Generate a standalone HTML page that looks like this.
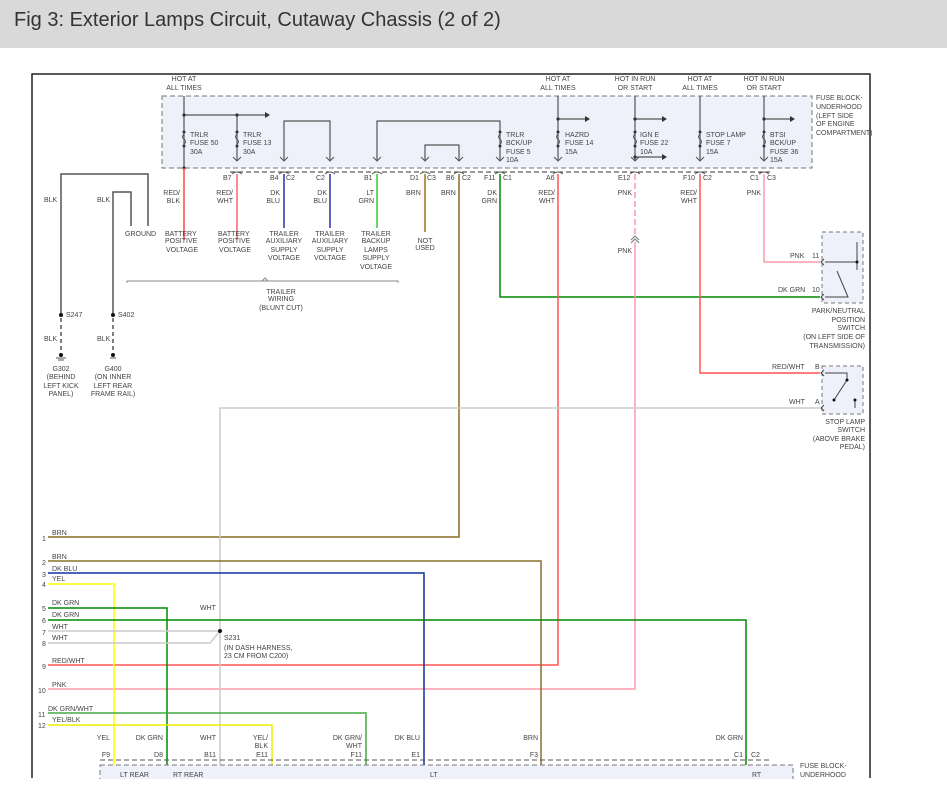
<!DOCTYPE html>
<html><head><meta charset="utf-8"><style>
html,body{margin:0;padding:0;background:#fff;}
body{width:947px;height:804px;overflow:hidden;}
.hdr{position:absolute;left:0;top:0;width:947px;height:48px;background:#d9d9d9;}
.hdr span{position:absolute;left:14px;top:9px;font:20px "Liberation Sans",sans-serif;color:#333;}
svg{position:absolute;left:0;top:0;}
text{font-family:"Liberation Sans",sans-serif;font-size:7px;fill:#444;}
</style></head><body>
<div class="hdr"><span>Fig 3: Exterior Lamps Circuit, Cutaway Chassis (2 of 2)</span></div>
<svg width="947" height="804" viewBox="0 0 947 804">
<!-- frame -->
<path d="M32 778V74H870V778" fill="none" stroke="#222" stroke-width="1.5"/>
<!-- fuse block -->
<rect x="162" y="96" width="650" height="72" fill="#eef0fa" stroke="#777" stroke-dasharray="5,3"/>
<path d="M230 172H770" stroke="#333" stroke-dasharray="5,3"/>
<g fill="none" stroke="#555" stroke-width="1.2">
<path d="M184 96V168M184 115H265M237 115V160"/>
<path d="M284 160V121H330V160M377 160V121H500V160M425 160V145H459V160"/>
<path d="M558 96V160M558 119H585M635 96V160M635 119H662M635 157H662M700 96V160M764 96V160M764 119H790"/>
</g>
<g fill="#333"><path d="M265 112l5 3-5 3zM585 116l5 3-5 3zM662 116l5 3-5 3zM662 154l5 3-5 3zM790 116l5 3-5 3z"/>
<circle cx="184" cy="115" r="1.6"/><circle cx="237" cy="115" r="1.6"/><circle cx="558" cy="119" r="1.6"/><circle cx="635" cy="119" r="1.6"/><circle cx="635" cy="157" r="1.6"/><circle cx="764" cy="119" r="1.6"/><circle cx="184" cy="168" r="1.6"/>
<circle cx="184" cy="132" r="1.5"/><circle cx="184" cy="146" r="1.5"/><circle cx="237" cy="132" r="1.5"/><circle cx="237" cy="146" r="1.5"/><circle cx="500" cy="132" r="1.5"/><circle cx="500" cy="146" r="1.5"/><circle cx="558" cy="132" r="1.5"/><circle cx="558" cy="146" r="1.5"/><circle cx="635" cy="132" r="1.5"/><circle cx="635" cy="146" r="1.5"/><circle cx="700" cy="132" r="1.5"/><circle cx="700" cy="146" r="1.5"/><circle cx="764" cy="132" r="1.5"/><circle cx="764" cy="146" r="1.5"/></g>
<g fill="#eef0fa" stroke="#555"><path d="M184 134q-3 3 0 5q3 3 0 5M237 134q-3 3 0 5q3 3 0 5M500 134q-3 3 0 5q3 3 0 5M558 134q-3 3 0 5q3 3 0 5M635 134q-3 3 0 5q3 3 0 5M700 134q-3 3 0 5q3 3 0 5M764 134q-3 3 0 5q3 3 0 5" fill="none"/></g>
<g fill="none" stroke="#555"><path d="M233 157l4 4 4-4M280 157l4 4 4-4M326 157l4 4 4-4M373 157l4 4 4-4M421 157l4 4 4-4M455 157l4 4 4-4M496 157l4 4 4-4M554 157l4 4 4-4M631 157l4 4 4-4M696 157l4 4 4-4M760 157l4 4 4-4"/>
<path d="M232 174q5-4 10 0M279 174q5-4 10 0M325 174q5-4 10 0M372 174q5-4 10 0M420 174q5-4 10 0M454 174q5-4 10 0M495 174q5-4 10 0M553 174q5-4 10 0M630 174q5-4 10 0M695 174q5-4 10 0M759 174q5-4 10 0"/></g>
<!-- wires top -->
<g fill="none" stroke-width="1.5">
<path d="M184 168V240" stroke="#f44"/>
<path d="M237 174V240" stroke="#f66"/>
<path d="M284 174V228" stroke="#2233aa"/>
<path d="M330 174V228" stroke="#2233aa"/>
<path d="M377 174V228" stroke="#3c3"/>
<path d="M425 174V232" stroke="#a07020"/>
<path d="M459 174V537H48" stroke="#8a6a20"/>
<path d="M500 174V297H820" stroke="#080"/>
<path d="M558 174V665H48" stroke="#f55"/>
<path d="M635 174V236" stroke="#f9a" stroke-dasharray="6,3"/>
<path d="M635 242V689H48" stroke="#f9a"/>
<path d="M700 174V373H820" stroke="#f55"/>
<path d="M764 174V262H820" stroke="#f9a"/>
<path d="M820 408H220V778" stroke="#ccc"/>
<path d="M48 561H541V770" stroke="#8a7028"/>
<path d="M48 573H424V770" stroke="#1030a0"/>
<path d="M48 584H114V770" stroke="#ff0"/>
<path d="M48 608H167V770" stroke="#080"/>
<path d="M48 620H746V770" stroke="#080"/>
<path d="M48 631H220" stroke="#ccc"/>
<path d="M48 643H210L220 631" stroke="#ccc"/>
<path d="M48 713H366V770" stroke="#4a4"/>
<path d="M48 725H272V770" stroke="#ee0"/>
</g>
<path d="M631 240l4-4 4 4M631 243l4-4 4 4" fill="none" stroke="#777"/>
<circle cx="220" cy="631" r="2" fill="#111"/>
<!-- ground wires -->
<g fill="none" stroke="#555" stroke-width="1.5">
<path d="M61 315V174H148V226M113 315V192H131V226"/>
<path d="M61 318V350M113 318V350" stroke-dasharray="4,3"/>
</g>
<g fill="#111"><circle cx="61" cy="315" r="2"/><circle cx="113" cy="315" r="2"/><circle cx="61" cy="355" r="2"/><circle cx="113" cy="355" r="2"/></g>
<path d="M56 358h10M58 360h6M110 358h6" stroke="#555"/>
<path d="M127 283v-2H398v2M262 281l3-3 3 3" fill="none" stroke="#888"/>
<!-- switches -->
<rect x="822" y="232" width="41" height="71" fill="#eef0fa" stroke="#777" stroke-dasharray="4,3"/>
<rect x="822" y="366" width="41" height="48" fill="#eef0fa" stroke="#777" stroke-dasharray="4,3"/>
<g fill="none" stroke="#444"><path d="M825 262H858M857 242V270M825 297H848L837 271M825 373H847V380L834 400M825 408M855 400V408"/><path d="M824 259l-3 3 3 3M824 294l-3 3 3 3M824 370l-3 3 3 3M824 405l-3 3 3 3"/></g>
<g fill="#111"><circle cx="857" cy="262" r="1.5"/><circle cx="847" cy="380" r="1.5"/><circle cx="834" cy="400" r="1.5"/><circle cx="855" cy="400" r="1.5"/></g>
<!-- bottom block -->
<path d="M100 760H770" stroke="#555" stroke-dasharray="5,3"/>
<rect x="100" y="765" width="693" height="20" fill="#eef0fa" stroke="#777" stroke-dasharray="5,3"/>
<!-- texts -->
<g>
<text x="184" y="81" text-anchor="middle">HOT AT</text><text x="184" y="90" text-anchor="middle">ALL TIMES</text>
<text x="558" y="81" text-anchor="middle">HOT AT</text><text x="558" y="90" text-anchor="middle">ALL TIMES</text>
<text x="635" y="81" text-anchor="middle">HOT IN RUN</text><text x="635" y="90" text-anchor="middle">OR START</text>
<text x="700" y="81" text-anchor="middle">HOT AT</text><text x="700" y="90" text-anchor="middle">ALL TIMES</text>
<text x="764" y="81" text-anchor="middle">HOT IN RUN</text><text x="764" y="90" text-anchor="middle">OR START</text>
<text x="816" y="100">FUSE BLOCK-</text><text x="816" y="109">UNDERHOOD</text><text x="816" y="118">(LEFT SIDE</text><text x="816" y="126">OF ENGINE</text><text x="816" y="135">COMPARTMENT)</text>
<text x="190" y="137">TRLR</text><text x="190" y="145">FUSE 50</text><text x="190" y="154">30A</text>
<text x="243" y="137">TRLR</text><text x="243" y="145">FUSE 13</text><text x="243" y="154">30A</text>
<text x="506" y="137">TRLR</text><text x="506" y="145">BCK/UP</text><text x="506" y="154">FUSE 5</text><text x="506" y="162">10A</text>
<text x="565" y="137">HAZRD</text><text x="565" y="145">FUSE 14</text><text x="565" y="154">15A</text>
<text x="640" y="137">IGN E</text><text x="640" y="145">FUSE 22</text><text x="640" y="154">10A</text>
<text x="706" y="137">STOP LAMP</text><text x="706" y="145">FUSE 7</text><text x="706" y="154">15A</text>
<text x="770" y="137">BTSI</text><text x="770" y="145">BCK/UP</text><text x="770" y="154">FUSE 36</text><text x="770" y="162">15A</text>
<text x="223" y="180">B7</text><text x="270" y="180">B4</text><text x="286" y="180">C2</text><text x="316" y="180">C2</text><text x="364" y="180">B1</text><text x="410" y="180">D1</text><text x="427" y="180">C3</text><text x="446" y="180">B6</text><text x="462" y="180">C2</text><text x="484" y="180">F11</text><text x="503" y="180">C1</text><text x="546" y="180">A6</text><text x="618" y="180">E12</text><text x="683" y="180">F10</text><text x="703" y="180">C2</text><text x="750" y="180">C1</text><text x="767" y="180">C3</text>
<text x="180" y="195" text-anchor="end">RED/</text><text x="180" y="203" text-anchor="end">BLK</text>
<text x="233" y="195" text-anchor="end">RED/</text><text x="233" y="203" text-anchor="end">WHT</text>
<text x="280" y="195" text-anchor="end">DK</text><text x="280" y="203" text-anchor="end">BLU</text>
<text x="327" y="195" text-anchor="end">DK</text><text x="327" y="203" text-anchor="end">BLU</text>
<text x="374" y="195" text-anchor="end">LT</text><text x="374" y="203" text-anchor="end">GRN</text>
<text x="406" y="195">BRN</text><text x="441" y="195">BRN</text>
<text x="497" y="195" text-anchor="end">DK</text><text x="497" y="203" text-anchor="end">GRN</text>
<text x="555" y="195" text-anchor="end">RED/</text><text x="555" y="203" text-anchor="end">WHT</text>
<text x="632" y="195" text-anchor="end">PNK</text>
<text x="697" y="195" text-anchor="end">RED/</text><text x="697" y="203" text-anchor="end">WHT</text>
<text x="761" y="195" text-anchor="end">PNK</text>
<text x="632" y="253" text-anchor="end">PNK</text>
<text x="44" y="202">BLK</text><text x="97" y="202">BLK</text>
<text x="125" y="236">GROUND</text>
<text x="165" y="236">BATTERY</text><text x="165" y="243">POSITIVE</text><text x="166" y="252">VOLTAGE</text>
<text x="218" y="236">BATTERY</text><text x="218" y="243">POSITIVE</text><text x="219" y="252">VOLTAGE</text>
<text x="284" y="236" text-anchor="middle">TRAILER</text><text x="284" y="243" text-anchor="middle">AUXILIARY</text><text x="284" y="252" text-anchor="middle">SUPPLY</text><text x="284" y="260" text-anchor="middle">VOLTAGE</text>
<text x="330" y="236" text-anchor="middle">TRAILER</text><text x="330" y="243" text-anchor="middle">AUXILIARY</text><text x="330" y="252" text-anchor="middle">SUPPLY</text><text x="330" y="260" text-anchor="middle">VOLTAGE</text>
<text x="376" y="236" text-anchor="middle">TRAILER</text><text x="376" y="243" text-anchor="middle">BACKUP</text><text x="376" y="252" text-anchor="middle">LAMPS</text><text x="376" y="260" text-anchor="middle">SUPPLY</text><text x="376" y="269" text-anchor="middle">VOLTAGE</text>
<text x="425" y="243" text-anchor="middle">NOT</text><text x="425" y="250" text-anchor="middle">USED</text>
<text x="281" y="294" text-anchor="middle">TRAILER</text><text x="281" y="301" text-anchor="middle">WIRING</text><text x="281" y="310" text-anchor="middle">(BLUNT CUT)</text>
<text x="66" y="317">S247</text><text x="118" y="317">S402</text>
<text x="44" y="341">BLK</text><text x="97" y="341">BLK</text>
<text x="61" y="371" text-anchor="middle">G302</text><text x="61" y="379" text-anchor="middle">(BEHIND</text><text x="61" y="388" text-anchor="middle">LEFT KICK</text><text x="61" y="396" text-anchor="middle">PANEL)</text>
<text x="113" y="371" text-anchor="middle">G400</text><text x="113" y="379" text-anchor="middle">(ON INNER</text><text x="113" y="388" text-anchor="middle">LEFT REAR</text><text x="113" y="396" text-anchor="middle">FRAME RAIL)</text>
<text x="790" y="258">PNK</text><text x="812" y="258">11</text>
<text x="778" y="292">DK GRN</text><text x="812" y="292">10</text>
<text x="865" y="313" text-anchor="end">PARK/NEUTRAL</text><text x="865" y="322" text-anchor="end">POSITION</text><text x="865" y="330" text-anchor="end">SWITCH</text><text x="865" y="339" text-anchor="end">(ON LEFT SIDE OF</text><text x="865" y="348" text-anchor="end">TRANSMISSION)</text>
<text x="772" y="369">RED/WHT</text><text x="815" y="369">B</text>
<text x="789" y="404">WHT</text><text x="815" y="404">A</text>
<text x="865" y="424" text-anchor="end">STOP LAMP</text><text x="865" y="432" text-anchor="end">SWITCH</text><text x="865" y="441" text-anchor="end">(ABOVE BRAKE</text><text x="865" y="449" text-anchor="end">PEDAL)</text>
<text x="52" y="535">BRN</text><text x="42" y="541">1</text>
<text x="52" y="559">BRN</text><text x="42" y="565">2</text>
<text x="52" y="571">DK BLU</text><text x="42" y="577">3</text>
<text x="52" y="581">YEL</text><text x="42" y="587">4</text>
<text x="52" y="605">DK GRN</text><text x="42" y="611">5</text>
<text x="52" y="617">DK GRN</text><text x="42" y="623">6</text>
<text x="52" y="629">WHT</text><text x="42" y="635">7</text>
<text x="52" y="640">WHT</text><text x="42" y="646">8</text>
<text x="52" y="663">RED/WHT</text><text x="42" y="669">9</text>
<text x="52" y="687">PNK</text><text x="38" y="693">10</text>
<text x="48" y="711">DK GRN/WHT</text><text x="38" y="717">11</text>
<text x="52" y="722">YEL/BLK</text><text x="38" y="728">12</text>
<text x="200" y="610">WHT</text>
<text x="224" y="640">S231</text><text x="224" y="650">(IN DASH HARNESS,</text><text x="224" y="658">23 CM FROM C200)</text>
<text x="110" y="740" text-anchor="end">YEL</text><text x="163" y="740" text-anchor="end">DK GRN</text><text x="216" y="740" text-anchor="end">WHT</text>
<text x="268" y="740" text-anchor="end">YEL/</text><text x="268" y="748" text-anchor="end">BLK</text>
<text x="362" y="740" text-anchor="end">DK GRN/</text><text x="362" y="748" text-anchor="end">WHT</text>
<text x="420" y="740" text-anchor="end">DK BLU</text><text x="538" y="740" text-anchor="end">BRN</text><text x="743" y="740" text-anchor="end">DK GRN</text>
<text x="110" y="757" text-anchor="end">F9</text><text x="163" y="757" text-anchor="end">D8</text><text x="216" y="757" text-anchor="end">B11</text><text x="268" y="757" text-anchor="end">E11</text><text x="362" y="757" text-anchor="end">F11</text><text x="420" y="757" text-anchor="end">E1</text><text x="538" y="757" text-anchor="end">F3</text><text x="743" y="757" text-anchor="end">C1</text><text x="751" y="757">C2</text>
<text x="120" y="777">LT REAR</text><text x="173" y="777">RT REAR</text><text x="430" y="777">LT</text><text x="752" y="777">RT</text>
<text x="800" y="768">FUSE BLOCK-</text><text x="800" y="777">UNDERHOOD</text>
</g>
<rect x="0" y="779" width="947" height="25" fill="#fff"/>
</svg>
</body></html>
